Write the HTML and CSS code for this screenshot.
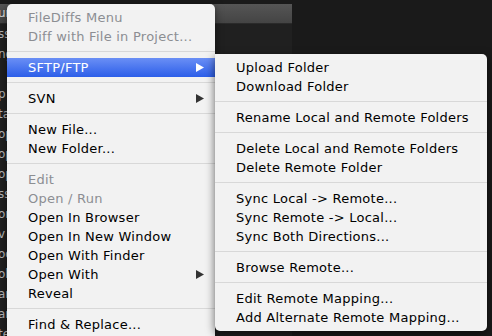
FILE: index.html
```html
<!DOCTYPE html>
<html>
<head>
<meta charset="utf-8">
<link rel="stylesheet" href="styles.css">
</head>
<body>
<div class="screen">
  <div class="sidebar">
    <div class="sb-head"><span class="frag">ur</span></div>
    <div class="sb-row">ss</div>
    <div class="sb-row">ng</div>
    <div class="sb-row"></div>
    <div class="sb-row">p</div>
    <div class="sb-row">ta</div>
    <div class="sb-row">op</div>
    <div class="sb-row">op</div>
    <div class="sb-row">op</div>
    <div class="sb-row">ss</div>
    <div class="sb-row">or</div>
    <div class="sb-row">v</div>
    <div class="sb-row">od</div>
    <div class="sb-row">ob</div>
    <div class="sb-row">ar</div>
    <div class="sb-row">ar</div>
    <div class="sb-row">te</div>
  </div>

  <div class="menu main-menu">
    <div class="item disabled">FileDiffs Menu</div>
    <div class="item disabled">Diff with File in Project...</div>
    <div class="sep"></div>
    <div class="item active">SFTP/FTP<svg class="arrow" viewBox="0 0 8 9" width="8" height="9"><polygon points="0,0 8,4.5 0,9"/></svg></div>
    <div class="sep"></div>
    <div class="item">SVN<svg class="arrow" viewBox="0 0 8 9" width="8" height="9"><polygon points="0,0 8,4.5 0,9"/></svg></div>
    <div class="sep"></div>
    <div class="item">New File...</div>
    <div class="item">New Folder...</div>
    <div class="sep"></div>
    <div class="item disabled">Edit</div>
    <div class="item disabled">Open / Run</div>
    <div class="item">Open In Browser</div>
    <div class="item">Open In New Window</div>
    <div class="item">Open With Finder</div>
    <div class="item">Open With<svg class="arrow" viewBox="0 0 8 9" width="8" height="9"><polygon points="0,0 8,4.5 0,9"/></svg></div>
    <div class="item">Reveal</div>
    <div class="sep"></div>
    <div class="item">Find &amp; Replace...</div>
    <div class="item">Find in Folder...</div>
  </div>

  <div class="menu sub-menu">
    <div class="item">Upload Folder</div>
    <div class="item">Download Folder</div>
    <div class="sep"></div>
    <div class="item">Rename Local and Remote Folders</div>
    <div class="sep"></div>
    <div class="item">Delete Local and Remote Folders</div>
    <div class="item">Delete Remote Folder</div>
    <div class="sep"></div>
    <div class="item">Sync Local -&gt; Remote...</div>
    <div class="item">Sync Remote -&gt; Local...</div>
    <div class="item">Sync Both Directions...</div>
    <div class="sep"></div>
    <div class="item">Browse Remote...</div>
    <div class="sep"></div>
    <div class="item">Edit Remote Mapping...</div>
    <div class="item">Add Alternate Remote Mapping...</div>
  </div>
</div>
</body>
</html>
```

FILE: styles.css
```css
html, body {
  margin: 0;
  padding: 0;
  background: #1a1a1a;
}

.screen {
  position: relative;
  width: 492px;
  height: 336px;
  overflow: hidden;
  background: #1a1a1a;
  font-family: "DejaVu Sans", "Liberation Sans", sans-serif;
}

.sidebar {
  width: 292px;
  margin-top: 4px;
  height: 332px;
  background: #202020;
  display: flex;
  flex-direction: column;
}

.sb-head {
  height: 19px;
  background: linear-gradient(#555555, #444444);
  border-bottom: 1px solid #2a2a2a;
  color: #e0e0e0;
  font-size: 12px;
  line-height: 19px;
  flex: none;
}

.frag {
  margin-left: -2px;
}

.sb-row {
  height: 20px;
  flex: none;
  line-height: 20px;
  font-size: 12px;
  color: #b8b8b8;
  text-indent: -2px;
}

.menu {
  position: absolute;
  background: #f2f2f2;
  padding: 4px 0;
  font-size: 13px;
  letter-spacing: 0.25px;
  color: #000;
}

.main-menu {
  left: 7px;
  top: 4px;
  width: 208px;
  border-radius: 5px 5px 0 0;
  box-shadow: 0 2px 8px rgba(0, 0, 0, 0.5);
}

.sub-menu {
  left: 215px;
  top: 54px;
  width: 272px;
  border-radius: 0 5px 5px 5px;
  box-shadow: 0 3px 10px rgba(0, 0, 0, 0.6);
}

.item {
  height: 19px;
  line-height: 19px;
  padding-left: 21px;
  padding-right: 11px;
  display: flex;
  align-items: center;
  white-space: nowrap;
}

.item.disabled {
  color: #8c8e92;
}

.item.active {
  background: linear-gradient(#6a8ff5, #2c5ee9);
  color: #fff;
}

.arrow {
  margin-left: auto;
  fill: #333;
  flex: none;
}

.item.active .arrow {
  fill: #fff;
}

.sep {
  height: 1px;
  margin: 5px 0 6px;
  background: #d8d8d8;
}
```
